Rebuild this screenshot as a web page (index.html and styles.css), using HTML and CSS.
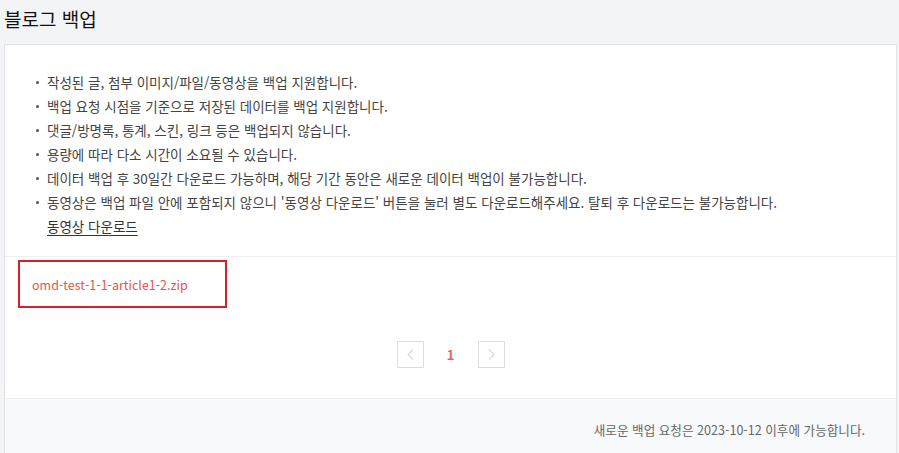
FILE: index.html
```html
<!DOCTYPE html>
<html lang="ko">
<head>
<meta charset="UTF-8">
<title>블로그 백업</title>
<link rel="stylesheet" href="styles.css">
</head>
<body>
<h1 class="title">블로그 백업</h1>
<div class="card">
  <ul class="notice">
    <li>작성된 글, 첨부 이미지/파일/동영상을 백업 지원합니다.</li>
    <li>백업 요청 시점을 기준으로 저장된 데이터를 백업 지원합니다.</li>
    <li>댓글/방명록, 통계, 스킨, 링크 등은 백업되지 않습니다.</li>
    <li>용량에 따라 다소 시간이 소요될 수 있습니다.</li>
    <li>데이터 백업 후 30일간 다운로드 가능하며, 해당 기간 동안은 새로운 데이터 백업이 불가능합니다.</li>
    <li>동영상은 백업 파일 안에 포함되지 않으니 '동영상 다운로드' 버튼을 눌러 별도 다운로드해주세요. 탈퇴 후 다운로드는 불가능합니다.<br>
      <a href="#" class="video-link">동영상 다운로드</a></li>
  </ul>
  <div class="files">
    <a href="#" class="file">omd-test-1-1-article1-2.zip</a>
  </div>
  <div class="pager">
    <a href="#" class="page-btn">
      <svg width="9" height="13" viewBox="0 0 9 13"><path d="M7 1.5 L2 6.5 L7 11.5" fill="none" stroke="#d8dae0" stroke-width="1.2"/></svg>
    </a>
    <span class="page-num">1</span>
    <a href="#" class="page-btn">
      <svg width="9" height="13" viewBox="0 0 9 13"><path d="M2 1.5 L7 6.5 L2 11.5" fill="none" stroke="#d8dae0" stroke-width="1.2"/></svg>
    </a>
  </div>
  <div class="footer">새로운 백업 요청은 2023-10-12 이후에 가능합니다.</div>
</div>
</body>
</html>
```

FILE: styles.css
```css
body {
  margin: 0;
  padding: 0 2px 0 4px;
  background: #f3f4f6;
  font-family: "Noto Sans CJK KR", "Noto Sans", sans-serif;
  color: #444;
}
.title {
  margin: 0;
  height: 44px;
  line-height: 38px;
  font-size: 19px;
  font-weight: 400;
  color: #111;
}
.card {
  background: #fff;
  border: 1px solid #e1e3e8;
  border-bottom: none;
}
.notice {
  list-style: none;
  margin: 0;
  padding: 25px 30px 18px 30px;
  font-size: 13.5px;
  line-height: 24px;
}
.notice li {
  position: relative;
  padding-left: 12px;
}
.notice li::before {
  content: "";
  position: absolute;
  left: 1px;
  top: 11px;
  width: 3px;
  height: 3px;
  border-radius: 50%;
  background: #555;
}
.video-link {
  color: #333;
  text-decoration: underline;
  text-underline-offset: 3px;
}
.files {
  border-top: 1px solid #eef0f2;
  padding: 3px 13px 0;
}
.file {
  display: flex;
  align-items: center;
  box-sizing: border-box;
  width: 209px;
  height: 48px;
  padding-left: 12px;
  border: 2px solid #d3212c;
  color: #e5554b;
  font-size: 12.5px;
  text-decoration: none;
}
.pager {
  display: flex;
  justify-content: center;
  align-items: center;
  margin: 33px 0 30px;
}
.page-btn {
  display: flex;
  justify-content: center;
  align-items: center;
  box-sizing: border-box;
  width: 27px;
  height: 27px;
  border: 1px solid #dcdee3;
}
.page-num {
  width: 54px;
  text-align: center;
  font-size: 13px;
  font-weight: 700;
  color: #f0625a;
}
.footer {
  background: #f8f9fb;
  border-top: 1px solid #eceef1;
  padding: 21px 31px 20px;
  text-align: right;
  font-size: 12.6px;
  color: #666;
}
```
